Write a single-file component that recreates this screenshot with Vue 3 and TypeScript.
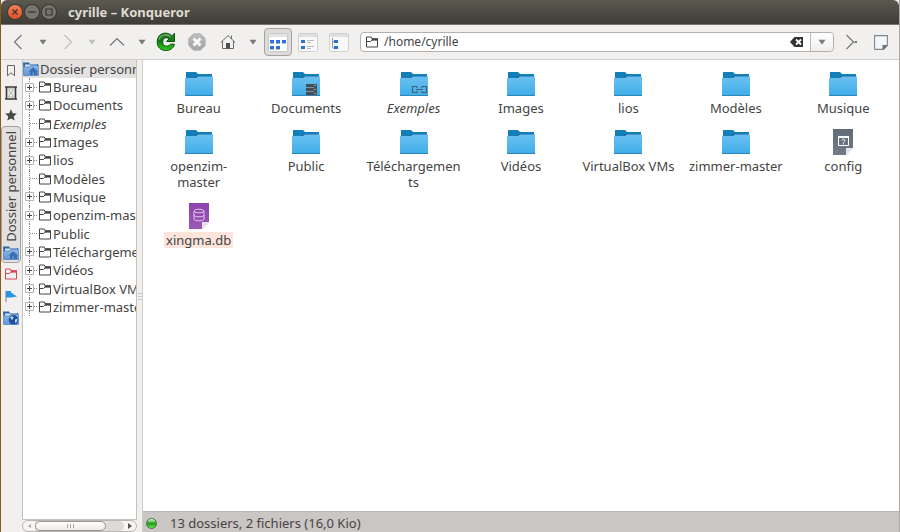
<script setup lang="ts">
import { ref } from 'vue'

interface Entry {
  label: string
  kind: 'folder' | 'config' | 'database'
  emblem?: 'documents' | 'link'
  link?: boolean
  selected?: boolean
}

interface TreeNode {
  label: string
  expandable: boolean
  link?: boolean
}

const location = ref('/home/cyrille')

const entries: Entry[] = [
  { label: 'Bureau', kind: 'folder' },
  { label: 'Documents', kind: 'folder', emblem: 'documents' },
  { label: 'Exemples', kind: 'folder', emblem: 'link', link: true },
  { label: 'Images', kind: 'folder' },
  { label: 'lios', kind: 'folder' },
  { label: 'Modèles', kind: 'folder' },
  { label: 'Musique', kind: 'folder' },
  { label: 'openzim-\nmaster', kind: 'folder' },
  { label: 'Public', kind: 'folder' },
  { label: 'Téléchargemen\nts', kind: 'folder' },
  { label: 'Vidéos', kind: 'folder' },
  { label: 'VirtualBox VMs', kind: 'folder' },
  { label: 'zimmer-master', kind: 'folder' },
  { label: 'config', kind: 'config' },
  { label: 'xingma.db', kind: 'database', selected: true },
]

const tree: TreeNode[] = [
  { label: 'Bureau', expandable: true },
  { label: 'Documents', expandable: true },
  { label: 'Exemples', expandable: false, link: true },
  { label: 'Images', expandable: true },
  { label: 'lios', expandable: true },
  { label: 'Modèles', expandable: false },
  { label: 'Musique', expandable: true },
  { label: 'openzim-master', expandable: true },
  { label: 'Public', expandable: false },
  { label: 'Téléchargements', expandable: true },
  { label: 'Vidéos', expandable: true },
  { label: 'VirtualBox VMs', expandable: true },
  { label: 'zimmer-master', expandable: true },
]
</script>

<template>
  <div class="window">
    <svg class="defs" width="0" height="0" aria-hidden="true">
      <defs>
        <linearGradient id="folderFront" x1="0" y1="0" x2="0" y2="1">
          <stop offset="0" stop-color="#6cc0f0" />
          <stop offset="1" stop-color="#3daee9" />
        </linearGradient>
        <linearGradient id="reloadGreen" x1="0" y1="0" x2="0" y2="1">
          <stop offset="0" stop-color="#2f7a2c" />
          <stop offset="0.5" stop-color="#128012" />
          <stop offset="1" stop-color="#30d020" />
        </linearGradient>
        <linearGradient id="stopGrey" x1="0" y1="0" x2="0" y2="1">
          <stop offset="0" stop-color="#bdbdbd" />
          <stop offset="1" stop-color="#a4a4a4" />
        </linearGradient>
        <linearGradient id="purplePage" x1="0" y1="0" x2="0" y2="1">
          <stop offset="0" stop-color="#8e44ad" />
          <stop offset="1" stop-color="#9b59b6" />
        </linearGradient>
        <linearGradient id="greyPage" x1="0" y1="0" x2="0" y2="1">
          <stop offset="0" stop-color="#5f6b76" />
          <stop offset="1" stop-color="#717c88" />
        </linearGradient>
        <linearGradient id="homeBlue" x1="0" y1="0" x2="0" y2="1">
          <stop offset="0" stop-color="#8fb6e4" />
          <stop offset="1" stop-color="#5f97d6" />
        </linearGradient>
        <symbol id="outlineFolder" viewBox="0 0 12 12">
          <path d="M.5 11V1h4.800l1 2h5.200v8z" fill="none" stroke="currentColor" />
          <path d="M1 5.500h3.500l1.500-1.500h5.500" fill="none" stroke="currentColor" />
          <path d="M6 2.300h6v2H5.500z" fill="currentColor" />
        </symbol>
        <symbol id="openFolder" viewBox="0 0 16 14">
          <path d="M0 .5h6L7 2h8v11H1z" fill="#2f64a6" />
          <path d="M2 2.500h12v3H2z" fill="#d5e2f2" />
          <path d="M0 5h6l1.500-1.500H16L15.500 13.500H.6z" fill="url(#homeBlue)" stroke="#4a7dbb" stroke-width=".7" />
        </symbol>
        <symbol id="homeFolder" viewBox="0 0 16 14">
          <use href="#openFolder" width="16" height="14" />
          <path d="M10 5.200 15 9.400h-1V13h-3v-2.500H9.500V13H7V9.400H5.500z" fill="#3a6fb0" />
        </symbol>
        <symbol id="down" viewBox="0 0 8 6">
          <path d="M.5.800h7L4.400 5.300h-.8z" fill="currentColor" />
        </symbol>
      </defs>
    </svg>

    <header class="titlebar">
      <button class="wm close" type="button" aria-label="Fermer">
        <svg width="14" height="14" viewBox="0 0 14 14"><path d="m4.500 4.500 5 5m0-5-5 5" /></svg>
      </button>
      <button class="wm" type="button" aria-label="Réduire">
        <svg width="14" height="14" viewBox="0 0 14 14"><path d="M3.500 7h7" /></svg>
      </button>
      <button class="wm" type="button" aria-label="Agrandir">
        <svg width="14" height="14" viewBox="0 0 14 14"><path d="M4 4h6v6H4z" /></svg>
      </button>
      <h1>cyrille – Konqueror</h1>
    </header>

    <nav class="toolbar">
      <button class="tool" type="button" aria-label="Précédent">
        <svg width="10" height="16" viewBox="0 0 10 16" class="line"><path d="M8.500 1 1.500 8l7 7" /></svg>
      </button>
      <button class="tool wide" type="button" aria-label="Historique précédent"><svg width="8" height="6" class="caret"><use href="#down" /></svg></button>
      <button class="tool off" type="button" aria-label="Suivant">
        <svg width="10" height="16" viewBox="0 0 10 16" class="line"><path d="m1.500 1 7 7-7 7" /></svg>
      </button>
      <button class="tool off" type="button" aria-label="Historique suivant"><svg width="8" height="6" class="caret"><use href="#down" /></svg></button>
      <button class="tool wide" type="button" aria-label="Monter">
        <svg width="16" height="10" viewBox="0 0 16 10" class="line"><path d="m1 8.500 7-7 7 7" /></svg>
      </button>
      <button class="tool" type="button" aria-label="Dossiers parents"><svg width="8" height="6" class="caret"><use href="#down" /></svg></button>
      <button class="tool" type="button" aria-label="Recharger">
        <svg width="20" height="20" viewBox="0 0 20 20">
          <path d="M18.500 1.200v8.300h-8l2.600-2.700C10.500 4.600 6.800 5.800 6.700 10c0 4.500 5.300 5.600 7.800 2.200h3.900C16.800 21 1.200 21 1.200 10 1.200.8 11-1.300 15.800 3.900z" fill="url(#reloadGreen)" stroke="#0b560c" stroke-linejoin="round" />
          <path d="M3 7.500C4.500 2.600 11 1.400 14.500 4.600" fill="none" stroke="#7fb878" stroke-width="1.200" />
        </svg>
      </button>
      <button class="tool stop" type="button" aria-label="Arrêter">
        <svg width="18" height="18" viewBox="0 0 18 18">
          <path d="M5.500.8h7l4.700 4.700v7l-4.700 4.700h-7L.8 12.500v-7z" fill="url(#stopGrey)" stroke="#b4b4b4" />
          <path d="m5.500 5.500 7 7m0-7-7 7" stroke="#f8f8f8" stroke-width="3" />
        </svg>
      </button>
      <button class="tool" type="button" aria-label="Dossier personnel">
        <svg width="16" height="16" viewBox="0 0 16 16">
          <path d="M.8 8.500 8 1.500l7.200 7M2.500 7v7.500h11V7M11.500 1.500V5" fill="none" stroke="#6a6a6a" />
          <path d="M6 9h4v5.500H6z" fill="#4d4d4d" />
        </svg>
      </button>
      <button class="tool wide" type="button" aria-label="Signets de départ"><svg width="8" height="6" class="caret"><use href="#down" /></svg></button>

      <button class="view active" type="button" aria-label="Icônes">
        <svg width="20" height="19" viewBox="0 0 20 19">
          <rect x=".5" y=".5" width="19" height="18" rx="1" fill="#fff" stroke="#c8c8c8" />
          <path d="M1 1h18v3H1z" fill="#e4e4e4" />
          <path d="M2 7h4v3H2zm6 0h4v3H8zm6 0h4v3h-4zM2 13h4v3H2zm6 0h4v3H8z" fill="#2c6fd6" />
          <path d="M2 10.500h4m2 0h4m2 0h4M2 16.500h4m2 0h4" stroke="#9dbcea" />
        </svg>
      </button>
      <button class="view" type="button" aria-label="Liste">
        <svg width="20" height="19" viewBox="0 0 20 19">
          <rect x=".5" y=".5" width="19" height="18" rx="1" fill="#f8f8f8" stroke="#d0d0d0" />
          <path d="M1 1h18v3H1z" fill="#e0e0e0" />
          <path d="M3 7h4v3H3zm0 6h4v3H3z" fill="#2c6fd6" />
          <path d="M9 7.500h7m-7 2h4m-4 4h7m-7 2h4" stroke="#bbb" />
        </svg>
      </button>
      <button class="view" type="button" aria-label="Arborescence">
        <svg width="20" height="19" viewBox="0 0 20 19">
          <rect x=".5" y=".5" width="19" height="18" rx="1" fill="#f8f8f8" stroke="#d0d0d0" />
          <path d="M1 1h18v3H1z" fill="#e0e0e0" />
          <path d="M3.500 5v10H6M3.500 8.500H6" fill="none" stroke="#999" />
          <path d="M5 7h4v3H5zm0 6h4v3H5z" fill="#2c6fd6" />
        </svg>
      </button>

      <div class="location">
        <svg class="place" width="12" height="12"><use href="#outlineFolder" /></svg>
        <input v-model="location" type="text" aria-label="Emplacement" />
        <button class="clear" type="button" aria-label="Effacer" @click="location = ''">
          <svg width="13" height="10" viewBox="0 0 13 10">
            <path d="M0 5 4.500 0H13v10H4.500z" fill="#333" />
            <path d="m6 2.500 5 5m0-5-5 5" stroke="#fff" stroke-width="1.800" />
          </svg>
        </button>
        <button class="history" type="button" aria-label="Historique des emplacements"><svg width="8" height="6" class="caret"><use href="#down" /></svg></button>
      </div>

      <button class="tool go" type="button" aria-label="Aller">
        <svg width="13" height="16" viewBox="0 0 13 16" class="line"><path d="m1.500 1 7 7-7 7" /><path d="M9.500 8h2.500" stroke-width="2" /></svg>
      </button>
      <button class="tool wide" type="button" aria-label="Note">
        <svg width="14" height="15" viewBox="0 0 14 15">
          <path d="M.6.600h12.800v9.800l-4 4H.6z" fill="#f4f6f7" stroke="#7b8793" stroke-width="1.100" />
          <path d="M8.500 10h5v.6L9.300 15h-.8z" fill="#6a7783" />
        </svg>
      </button>
    </nav>

    <div class="body">
      <aside class="strip">
        <button type="button" aria-label="Signets">
          <svg width="8" height="12" viewBox="0 0 8 12"><path d="M.5.500h7v10.300L4 7.800.5 10.800z" fill="none" stroke="#666" /></svg>
        </button>
        <button type="button" aria-label="Historique">
          <svg width="12" height="14" viewBox="0 0 12 14">
            <path d="M2 1h8v12H2z" fill="#e4e4e2" />
            <path d="M0 1h12M0 13h12M1.500 1v12M10.500 1v12" stroke="#3a3a3a" stroke-width="1.600" />
            <path d="M3.500 3h5L3.500 11h5z" fill="#f6f6f6" stroke="#aaa" stroke-width=".8" />
          </svg>
        </button>
        <button type="button" aria-label="Favoris">
          <svg width="12" height="12" viewBox="0 0 12 12"><path d="m6 .3 1.700 3.900 4.200.4-3.200 2.800 1 4.200L6 9.400l-3.700 2.200 1-4.200L.1 4.600l4.200-.4z" fill="#484848" /></svg>
        </button>
        <button class="tab" type="button">
          <span>Dossier personnel</span>
          <svg width="16" height="14"><use href="#homeFolder" /></svg>
        </button>
        <button type="button" aria-label="Racine">
          <svg class="red" width="12" height="12"><use href="#outlineFolder" /></svg>
        </button>
        <button type="button" aria-label="Services">
          <svg width="12" height="12" viewBox="0 0 12 12"><path d="M1 1v11" stroke="#6f7f8a" /><path d="M1 1h5v1.500L12 6.500 6 7.500H1z" fill="#2595e8" /></svg>
        </button>
        <button type="button" aria-label="Réseau">
          <svg width="16" height="14" viewBox="0 0 16 14">
            <use href="#openFolder" width="16" height="14" />
            <circle cx="10.500" cy="8.800" r="4.800" fill="#1f4f9c" />
            <path d="m7 6.500 2.500-1.500L10.500 7 9 9zm5 2 2.500-1-.5 3-2 1.500z" fill="#b8d8f4" />
          </svg>
        </button>
      </aside>

      <section class="sidebar">
        <div class="treebox">
          <div class="root"><svg width="16" height="14"><use href="#homeFolder" /></svg><span>Dossier personnel</span></div>
          <ul class="tree">
            <li v-for="node in tree" :key="node.label">
              <span class="branch">
                <button v-if="node.expandable" type="button" class="plus" :aria-label="'Développer ' + node.label">
                  <svg width="9" height="9" viewBox="0 0 9 9"><path d="M.5.500h8v8h-8z" fill="#fff" stroke="#b4b4b4" /><path d="M2 4.500h5M4.500 2v5" stroke="#444" /></svg>
                </button>
              </span>
              <svg class="leaf" width="12" height="12"><use href="#outlineFolder" /></svg>
              <span :class="{ link: node.link }">{{ node.label }}</span>
            </li>
          </ul>
        </div>
        <div class="scrollbar">
          <button type="button" aria-label="Défiler à gauche"><svg width="4" height="6" viewBox="0 0 4 6"><path d="M4 1v4L1 3z" fill="#aaa" /></svg></button>
          <div class="track"><div class="thumb"><i></i><i></i><i></i></div></div>
          <button type="button" aria-label="Défiler à droite"><svg width="4" height="6" viewBox="0 0 4 6"><path d="M0 0v6l4-3z" fill="#555" /></svg></button>
        </div>
      </section>

      <div class="splitter"><i></i><i></i><i></i></div>

      <main class="pane">
        <ul class="files">
          <li v-for="entry in entries" :key="entry.label">
            <svg width="28" height="28" viewBox="0 0 28 28">
              <template v-if="entry.kind === 'folder'">
                <path d="M1 2h10l2 2h14v18H1z" fill="#147eb8" />
                <path d="M11 6h16v2H10z" fill="#1b6a96" />
                <path d="M0 8h11l2-1.500h15V26H0z" fill="url(#folderFront)" />
                <path d="M0 25.500h28" stroke="#2f86b6" />
                <g v-if="entry.emblem === 'documents'">
                  <path d="M14 14h11v11H14z" fill="#4a4d50" />
                  <path d="M14 17.500h8m-8 4h8" stroke="#6a9cb8" />
                  <path d="M22 15.500h2m-2 4h2m-2 4h2" stroke="#8ab" />
                </g>
                <path v-if="entry.emblem === 'link'" d="M17 16.500h-4.500v6H17v-1.500m0-3v-1.500m5 0h4.500v6H22v-1.500m0-3v-1.500M16 19.500h7" fill="none" stroke="#47606f" stroke-width="1.200" />
              </template>
              <template v-else>
                <path d="M4 1h20v19l-7 7H4z" :fill="entry.kind === 'config' ? 'url(#greyPage)' : 'url(#purplePage)'" />
                <path d="M24 20v7h-7z" fill="#fff" />
                <path d="M17 20h7l-7 7z" fill="#e4e1e8" />
                <template v-if="entry.kind === 'config'">
                  <path d="M9.500 8.500h10v9h-10z" fill="none" stroke="#fff" />
                  <path d="M9 9h11" stroke="#fff" stroke-width="2" />
                  <path d="M13 12.500c0-1.500 3-1.500 3 0 0 1-1.500 1-1.500 2.200m0 .6v1" fill="none" stroke="#fff" />
                </template>
                <g v-else fill="none" stroke="#e0c9ea">
                  <ellipse cx="14" cy="9" rx="5" ry="1.800" />
                  <path d="M9 9v8c0 2.400 10 2.400 10 0V9M9 13c0 2.400 10 2.400 10 0" />
                </g>
              </template>
            </svg>
            <span class="name" :class="{ link: entry.link, selected: entry.selected }">{{ entry.label }}</span>
          </li>
        </ul>
        <footer class="status"><i class="led"></i><span>13 dossiers, 2 fichiers (16,0 Kio)</span></footer>
      </main>
    </div>
  </div>
</template>

<style>
body {
  background: #f1f0ef;
}
</style>

<style scoped>
.window {
  box-sizing: border-box;
  display: flex;
  flex-direction: column;
  height: 100vh;
  overflow: hidden;
  border-left: 1px solid #8c5a14;
  border-right: 1px solid #aaa9a6;
  background: #f1f0ef;
  color: #444;
  font: 13px/16px "Noto Sans", "Open Sans", sans-serif;
}
.defs {
  position: absolute;
}
button {
  display: flex;
  align-items: center;
  justify-content: center;
  margin: 0;
  padding: 0;
  border: 0;
  background: none;
  color: inherit;
  font: inherit;
}
ul {
  margin: 0;
  padding: 0;
  list-style: none;
}
svg {
  flex: none;
}
.titlebar {
  flex: none;
  box-sizing: border-box;
  display: flex;
  align-items: center;
  gap: 3px;
  height: 25px;
  padding-left: 7px;
  border-bottom: 1px solid #75716d;
  border-radius: 6px 6px 0 0;
  background: linear-gradient(#5b5950, #3d3c37);
}
.wm {
  width: 14px;
  height: 14px;
  border-radius: 7px;
  background: #77756c;
  box-shadow: 0 0 0 1px #3a3934;
}
.wm path {
  fill: none;
  stroke: #35342f;
  stroke-width: 1.2;
}
.wm.close {
  background: linear-gradient(#f37f59, #e2501f);
}
h1 {
  margin: 0 0 0 9px;
  color: #dfdbd2;
  font-size: 13px;
  font-weight: 700;
  line-height: 16px;
}
.toolbar {
  flex: none;
  box-sizing: border-box;
  display: flex;
  align-items: center;
  height: 35px;
  padding: 0 5px;
  border-bottom: 1px solid #d2d0ce;
}
.tool {
  flex: none;
  width: 24px;
  height: 28px;
}
.tool.wide {
  width: 26px;
}
.tool.stop {
  width: 38px;
}
.tool.go {
  width: 34px;
}
.line {
  fill: none;
  stroke: #777;
  stroke-width: 1.2;
}
.caret {
  color: #7c7c7c;
}
.off .line {
  stroke: #c0c0c0;
}
.off .caret {
  color: #c0c0c0;
}
.view {
  flex: none;
  box-sizing: border-box;
  width: 31px;
  height: 28px;
}
.view.active {
  width: 28px;
  margin-left: -2px;
  border: 1px solid #a5a3a0;
  border-radius: 4px;
  background: #dddcda;
}
.location {
  flex: 1;
  box-sizing: border-box;
  display: flex;
  align-items: stretch;
  height: 20px;
  min-width: 0;
  margin-left: 6px;
  border: 1px solid #b3b0ad;
  border-radius: 4px;
  background: #fff;
}
.place {
  align-self: center;
  margin: 0 6px 0 5px;
}
.location input {
  flex: 1;
  min-width: 0;
  padding: 0;
  border: 0;
  outline: 0;
  background: none;
  color: #444;
  font: 12px/18px "Noto Sans", sans-serif;
}
.clear {
  width: 28px;
}
.history {
  width: 23px;
  border-left: 1px solid #bbb8b5;
  border-radius: 0 4px 4px 0;
  background: linear-gradient(#fff, #f0efee);
}
.body {
  flex: 1;
  display: flex;
  min-height: 0;
}
.strip {
  flex: none;
  display: flex;
  flex-direction: column;
  width: 20px;
  padding-right: 1px;
}
.strip button {
  flex: none;
  height: 22px;
}
.strip .tab {
  box-sizing: border-box;
  flex-direction: column;
  justify-content: flex-end;
  gap: 4px;
  height: 137px;
  padding-bottom: 2px;
  border: 1px solid #a5a29f;
  border-radius: 4px;
  background: #e2e1df;
}
.tab span {
  writing-mode: vertical-rl;
  rotate: 180deg;
  white-space: nowrap;
}
.red {
  color: #da4453;
}
.sidebar {
  flex: none;
  display: flex;
  flex-direction: column;
  width: 115px;
}
.treebox {
  flex: 1;
  min-height: 0;
  overflow: hidden;
  border: 1px solid #c4c2bf;
  border-top: 0;
  background: #fff;
}
.root {
  display: flex;
  align-items: center;
  gap: 1px;
  height: 18px;
  background: #e3e2e0;
  white-space: nowrap;
}
.tree {
  display: grid;
  grid-auto-rows: 1fr;
  height: 238px;
}
.tree li {
  display: flex;
  align-items: center;
  white-space: nowrap;
}
.branch {
  display: flex;
  align-items: center;
  align-self: stretch;
  width: 7px;
  margin-left: 6px;
  border-left: 1px dotted #888;
}
.branch::after {
  content: "";
  flex: 1;
  border-top: 1px dotted #888;
}
.plus {
  flex: none;
  margin-left: -5px;
}
.leaf {
  margin: 0 2px;
}
.link {
  font-style: italic;
}
.scrollbar {
  flex: none;
  box-sizing: border-box;
  display: flex;
  height: 12px;
  border: 1px solid #b8b5b2;
  border-radius: 6px;
  background: #f6f5f4;
}
.scrollbar button {
  width: 12px;
}
.track {
  flex: 1;
  display: flex;
  border-radius: 0 6px 6px 0;
  background: #dddad7;
}
.thumb {
  box-sizing: border-box;
  display: flex;
  align-items: center;
  justify-content: center;
  gap: 2px;
  width: 80%;
  border: 1px solid #999693;
  border-radius: 5px;
  background: linear-gradient(#fff, #eceae8);
}
.thumb i {
  width: 1px;
  height: 4px;
  background: #aaa;
}
.splitter {
  flex: none;
  display: flex;
  flex-direction: column;
  align-items: center;
  justify-content: center;
  gap: 2px;
  width: 5px;
}
.splitter i {
  width: 4px;
  height: 1px;
  background: #c9c7c4;
}
.pane {
  flex: 1;
  display: flex;
  flex-direction: column;
  min-width: 0;
  border-left: 1px solid #d0cecb;
  background: #fff;
}
.files {
  flex: 1;
  display: grid;
  grid-template-columns: repeat(7, 1fr);
  align-content: start;
  row-gap: 12px;
  padding: 10px 2px 0 2px;
}
.files li {
  display: flex;
  flex-direction: column;
  align-items: center;
  gap: 2px;
  min-width: 0;
}
.name {
  text-align: center;
  white-space: pre;
}
.name.selected {
  padding: 0 2px;
  background: #fde5dc;
}
.status {
  flex: none;
  box-sizing: border-box;
  display: flex;
  align-items: center;
  gap: 13px;
  height: 21px;
  padding: 2px 3px 0;
  border-top: 1px solid #bbb6b3;
  background: #cac6c3;
}
.led {
  box-sizing: border-box;
  width: 11px;
  height: 11px;
  border: 1px solid #4c6e48;
  border-radius: 6px;
  background: linear-gradient(#e0ffd8, #1e9e18 50%, #5bf04a);
}
</style>
